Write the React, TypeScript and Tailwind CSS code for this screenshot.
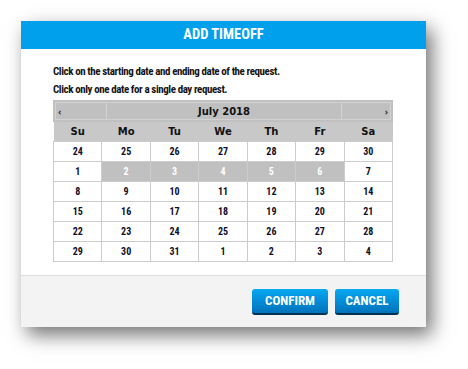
import React from "react";

const cond = { fontFamily: '"Roboto Condensed", "Liberation Sans Narrow", "DejaVu Sans Condensed", Roboto, sans-serif' };

const weeks: { d: number; sel?: boolean }[][] = [
  [24, 25, 26, 27, 28, 29, 30].map((d) => ({ d })),
  [{ d: 1 }, { d: 2, sel: true }, { d: 3, sel: true }, { d: 4, sel: true }, { d: 5, sel: true }, { d: 6, sel: true }, { d: 7 }],
  [8, 9, 10, 11, 12, 13, 14].map((d) => ({ d })),
  [15, 16, 17, 18, 19, 20, 21].map((d) => ({ d })),
  [22, 23, 24, 25, 26, 27, 28].map((d) => ({ d })),
  [29, 30, 31, 1, 2, 3, 4].map((d) => ({ d })),
];

const days = ["Su", "Mo", "Tu", "We", "Th", "Fr", "Sa"];

export default function App() {
  return (
    <div className="w-[468px] h-[369px] bg-white pl-[21px] pt-[21px] overflow-hidden">
      <div className="w-[405px] h-[306px] bg-white flex flex-col shadow-[6px_8px_18px_rgba(0,0,0,0.55)]">
        <div
          className="h-[28px] bg-[#00a0ec] text-white text-[14.5px] font-bold flex items-center justify-center"
          style={cond}
        >
          ADD TIMEOFF
        </div>
        <div className="flex-1 pl-[32px] pr-[33px] pt-[15px]">
          <div className="h-[16px] leading-[16px] text-[11px] font-bold tracking-[-0.42px] text-[#141414]" style={cond}>
            Click on the starting date and ending date of the request.
          </div>
          <div className="mt-[2px] h-[16px] leading-[16px] text-[11px] font-bold tracking-[-0.42px] text-[#141414]" style={cond}>
            Click only one date for a single day request.
          </div>
          <div className="mt-[2px] w-[340px]">
            <div className="h-[22px] bg-[#c0c0c0] p-[2px] flex">
              <div className="w-[52px] border border-[#d2d2d2] flex items-center pl-[2px] text-[9px] font-bold text-[#333] leading-none">
                ‹
              </div>
              <div
                className="flex-1 border-y border-[#d2d2d2] flex items-center justify-center text-[10px] font-bold text-[#111]"
                style={{ fontFamily: '"DejaVu Sans", Verdana, sans-serif' }}
              >
                July 2018
              </div>
              <div className="w-[50px] border border-[#d2d2d2] flex items-center justify-end pr-[2px] text-[9px] font-bold text-[#333] leading-none">
                ›
              </div>
            </div>
            <table className="w-[340px] table-fixed border-collapse">
              <thead>
                <tr className="h-[19px] bg-[#c8c8c8]">
                  {days.map((d) => (
                    <th
                      key={d}
                      className="p-0 text-[10px] font-bold text-[#111] text-center"
                      style={{ fontFamily: '"DejaVu Sans", Verdana, sans-serif' }}
                    >
                      {d}
                    </th>
                  ))}
                </tr>
              </thead>
              <tbody>
                {weeks.map((w, i) => (
                  <tr key={i} className="h-[20px]">
                    {w.map((c, j) => (
                      <td
                        key={j}
                        className={
                          "p-0 border border-[#cccccc] text-center text-[10px] font-bold " +
                          (c.sel ? "bg-[#c0c0c0] text-white" : "bg-white text-[#10102a]")
                        }
                        style={cond}
                      >
                        {c.d}
                      </td>
                    ))}
                  </tr>
                ))}
              </tbody>
            </table>
          </div>
        </div>
        <div className="h-[52px] border-t border-[#dddddd] bg-[#f3f3f3] flex items-start justify-end pt-[13px] pr-[27px] gap-[7px]">
          <button
            className="w-[76px] h-[26px] rounded-[3px] bg-gradient-to-b from-[#0aa8f2] to-[#0072bc] border-b-2 border-[#00324f] text-white text-[13px] font-bold flex items-center justify-center"
            style={cond}
          >
            CONFIRM
          </button>
          <button
            className="w-[64px] h-[26px] rounded-[3px] bg-gradient-to-b from-[#0aa8f2] to-[#0072bc] border-b-2 border-[#00324f] text-white text-[13px] font-bold flex items-center justify-center"
            style={cond}
          >
            CANCEL
          </button>
        </div>
      </div>
    </div>
  );
}
